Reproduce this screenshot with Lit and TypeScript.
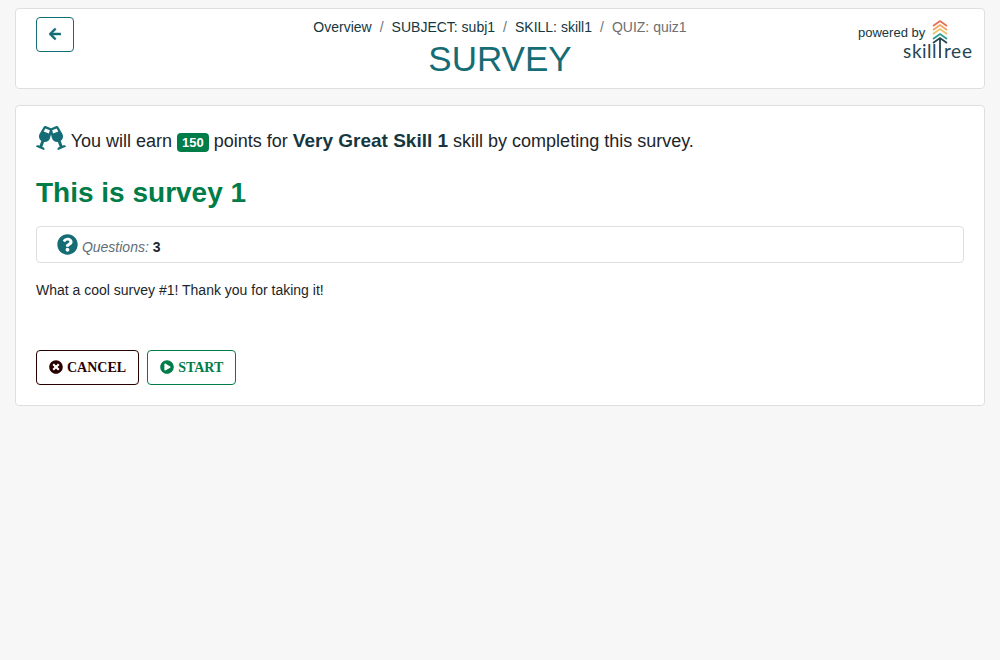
import { LitElement, html, svg, css } from "lit";
import { customElement } from "lit/decorators.js";

const icons = {
  arrowLeft: {
    box: "0 0 448 512",
    d: "M257.5 445.1l-22.2 22.2c-9.4 9.4-24.6 9.4-33.9 0L7 273c-9.4-9.4-9.4-24.6 0-33.9L201.4 44.7c9.4-9.4 24.6-9.4 33.9 0l22.2 22.2c9.5 9.5 9.3 25-.4 34.3L136.6 216H424c13.3 0 24 10.7 24 24v32c0 13.3-10.7 24-24 24H136.6l120.5 114.8c9.8 9.3 10 24.8.4 34.3z",
  },
  cheers: {
    box: "0 0 640 512",
    d: "M639.4 433.6c-8.4-20.4-31.8-30.1-52.2-21.6l-22.1 9.2-38.7-101.9c47.9-35 64.8-100.3 34.5-152.8L474.3 16c-8-13.9-25.1-19.7-40-13.6L320 49.8 205.7 2.4c-14.9-6.2-32-.3-40 13.6L79.1 166.5C48.9 219 65.7 284.3 113.6 319.2L74.9 421.1l-22.1-9.2c-20.4-8.5-43.7 1.2-52.2 21.6-1.7 4.1.2 8.8 4.3 10.5l162.3 67.4c4.1 1.7 8.7-.2 10.4-4.3 8.4-20.4-1.2-43.8-21.6-52.3l-22.1-9.2L173.3 342c4.4.5 8.8 1.3 13.1 1.3 51.7 0 99.4-33.1 113.4-85.3l20.2-75.4 20.2 75.4c14 52.2 61.7 85.3 113.4 85.3 4.3 0 8.7-.8 13.1-1.3L506 445.6l-22.1 9.2c-20.4 8.5-30.1 31.9-21.6 52.3 1.7 4.1 6.4 6 10.4 4.3L635.1 444c4-1.7 6-6.3 4.3-10.4zM275.9 162.1l-112.1-46.5 36.5-63.4 94.5 39.2-18.9 70.7zm88.2 0l-18.9-70.7 94.5-39.2 36.5 63.4-112.1 46.5z",
  },
  question: {
    box: "0 0 512 512",
    d: "M504 256c0 136.997-111.043 248-248 248S8 392.997 8 256C8 119.083 119.043 8 256 8s248 111.083 248 248zM262.655 90c-54.497 0-89.255 22.957-116.549 63.758-3.536 5.286-2.353 12.415 2.715 16.258l34.699 26.31c5.205 3.947 12.621 3.008 16.665-2.122 17.864-22.658 30.113-35.797 57.303-35.797 20.429 0 45.698 13.148 45.698 32.958 0 14.976-12.363 22.667-32.534 33.976C247.128 238.528 216 254.941 216 296v4c0 6.627 5.373 12 12 12h56c6.627 0 12-5.373 12-12v-1.333c0-28.462 83.186-29.647 83.186-106.667 0-58.002-60.165-102-116.531-102zM256 338c-25.365 0-46 20.635-46 46 0 25.364 20.635 46 46 46s46-20.636 46-46c0-25.365-20.635-46-46-46z",
  },
  times: {
    box: "0 0 512 512",
    d: "M256 8C119 8 8 119 8 256s111 248 248 248 248-111 248-248S393 8 256 8zm121.6 313.1c4.7 4.7 4.7 12.3 0 17L338 377.6c-4.7 4.7-12.3 4.7-17 0L256 312l-65.1 65.6c-4.7 4.7-12.3 4.7-17 0L134.4 338c-4.7-4.7-4.7-12.3 0-17l65.6-65-65.6-65.1c-4.7-4.7-4.7-12.3 0-17l39.6-39.6c4.7-4.7 12.3-4.7 17 0l65 65.7 65.1-65.6c4.7-4.7 12.3-4.7 17 0l39.6 39.6c4.7 4.7 4.7 12.3 0 17L312 256l65.6 65.1z",
  },
  play: {
    box: "0 0 512 512",
    d: "M256 8C119 8 8 119 8 256s111 248 248 248 248-111 248-248S393 8 256 8zm115.7 272l-176 101c-15.8 8.8-35.7-2.5-35.7-21V152c0-18.4 19.8-29.8 35.7-21l176 107c16.4 9.2 16.4 32.9 0 42z",
  },
};

const icon = (name: keyof typeof icons, cls: string) => html`
  <svg class="icon ${cls}" viewBox=${icons[name].box} aria-hidden="true"><path d=${icons[name].d}></path></svg>`;

const chevrons = [
  { y: 4, color: "#e76f51" },
  { y: 8, color: "#f4a261" },
  { y: 12, color: "#e9c46a" },
  { y: 17, color: "#2a9d8f" },
];

@customElement("app-root")
export class AppRoot extends LitElement {
  static styles = css`
    :host {
      display: block;
      min-height: 100vh;
      box-sizing: border-box;
      padding: 8px 15px;
      background: #f7f7f7;
      color: #212529;
      font: 14px/21px "Liberation Sans", Arial, sans-serif;
    }
    .card {
      background: #fff;
      border: 1px solid #dfdfdf;
      border-radius: 4px;
    }
    .header {
      display: grid;
      grid-template-columns: 1fr auto 1fr;
      align-items: start;
      padding: 8px 12px;
      margin-bottom: 16px;
    }
    .icon {
      fill: currentColor;
      flex: none;
      vertical-align: -3px;
    }
    .btn {
      display: inline-flex;
      align-items: center;
      justify-content: center;
      gap: 4px;
      box-sizing: border-box;
      height: 35px;
      padding: 0 12px;
      border: 1px solid currentColor;
      border-radius: 4px;
      background: #fff;
      font: bold 14px/21px "Liberation Serif", "Times New Roman", serif;
      text-transform: uppercase;
      cursor: pointer;
    }
    .btn .icon {
      margin-bottom: 2px;
    }
    .back {
      justify-self: start;
      margin-left: 8px;
      color: #146c75;
    }
    .back-icon {
      width: 12px;
      height: 14px;
      stroke: currentColor;
      stroke-width: 16px;
    }
    .crumbs {
      display: flex;
      justify-content: center;
      gap: 8px;
      margin: 0;
      padding: 0;
      list-style: none;
      color: #6c757d;
    }
    .crumbs li {
      display: flex;
      gap: 8px;
    }
    .crumbs li + li::before {
      content: "/";
    }
    .crumbs a {
      color: #143740;
      text-decoration: none;
    }
    .current {
      color: #6f6f6f;
    }
    .title {
      margin: 0;
      text-align: center;
      font-size: 35px;
      line-height: 42px;
      font-weight: 400;
      color: #146c75;
    }
    .brand {
      justify-self: end;
      display: flex;
      color: #143740;
    }
    .logo {
      width: 116px;
      height: 44px;
      overflow: visible;
    }
    .powered {
      font: 13px "Liberation Sans", Arial, sans-serif;
      fill: #143740;
    }
    .wordmark {
      font: 19px Lato, sans-serif;
      fill: #264653;
    }
    .content {
      padding: 20px;
    }
    .earn {
      margin: 0 0 20px;
      font-size: 18px;
      line-height: 30px;
    }
    .cheers {
      width: 30px;
      height: 24px;
      color: #146c75;
    }
    .badge {
      display: inline-block;
      padding: 3px 5px;
      border-radius: 4px;
      background: #007c49;
      color: #fff;
      font-size: 13px;
      line-height: 13px;
      font-weight: 700;
    }
    .skill {
      color: #143740;
      font-size: 19px;
    }
    .name {
      margin: 0 0 16px;
      font-size: 28px;
      line-height: 34px;
      font-weight: 700;
      color: #007c49;
    }
    .facts {
      padding: 7px 20px 2px;
      margin-bottom: 17px;
      line-height: 26px;
    }
    .question {
      width: 21px;
      height: 21px;
      color: #146c75;
    }
    .label {
      color: #606f78;
    }
    .desc {
      margin: 0 0 49px;
    }
    .actions {
      display: flex;
      flex-wrap: wrap;
      gap: 8px;
    }
    .cancel {
      color: #290000;
    }
    .start {
      color: #007c49;
    }
    .small {
      width: 14px;
      height: 14px;
    }
  `;

  private renderLogo() {
    return html`
      <svg class="logo" viewBox="0 0 116 44" role="img" aria-label="powered by skilltree">
        <text class="powered" x="2" y="20">powered by</text>
        ${chevrons.map(
          ({ y, color }) => svg`<path d="M77 ${y + 5}L84 ${y}L91 ${y + 5}" fill="none" stroke=${color} stroke-width="1.8"></path>`
        )}
        <path d="M77 26L84 21L91 26M84 21V41" fill="none" stroke="#264653" stroke-width="1.8"></path>
        <text class="wordmark" x="47 56 66 71 76" y="41">skill</text>
        <text class="wordmark" x="88 95 106" y="41">ree</text>
      </svg>`;
  }

  render() {
    return html`
      <header class="card header">
        <button class="btn back" type="button" aria-label="Back">${icon("arrowLeft", "back-icon")}</button>
        <div>
          <nav aria-label="breadcrumb">
            <ol class="crumbs">
              <li><a href="#overview">Overview</a></li>
              <li><a href="#subj1">SUBJECT: subj1</a></li>
              <li><a href="#skill1">SKILL: skill1</a></li>
              <li><span class="current" aria-current="page">QUIZ: quiz1</span></li>
            </ol>
          </nav>
          <h1 class="title">SURVEY</h1>
        </div>
        <div class="brand">${this.renderLogo()}</div>
      </header>
      <main class="card content">
        <p class="earn">
          ${icon("cheers", "cheers")} You will earn <span class="badge">150</span> points for
          <strong class="skill">Very Great Skill 1</strong> skill by completing this survey.
        </p>
        <h2 class="name">This is survey 1</h2>
        <div class="card facts">
          ${icon("question", "question")} <em class="label">Questions:</em> <strong>3</strong>
        </div>
        <p class="desc">What a cool survey #1! Thank you for taking it!</p>
        <div class="actions">
          <button class="btn cancel" type="button">${icon("times", "small")}<span>Cancel</span></button>
          <button class="btn start" type="button">${icon("play", "small")}<span>Start</span></button>
        </div>
      </main>
    `;
  }
}
